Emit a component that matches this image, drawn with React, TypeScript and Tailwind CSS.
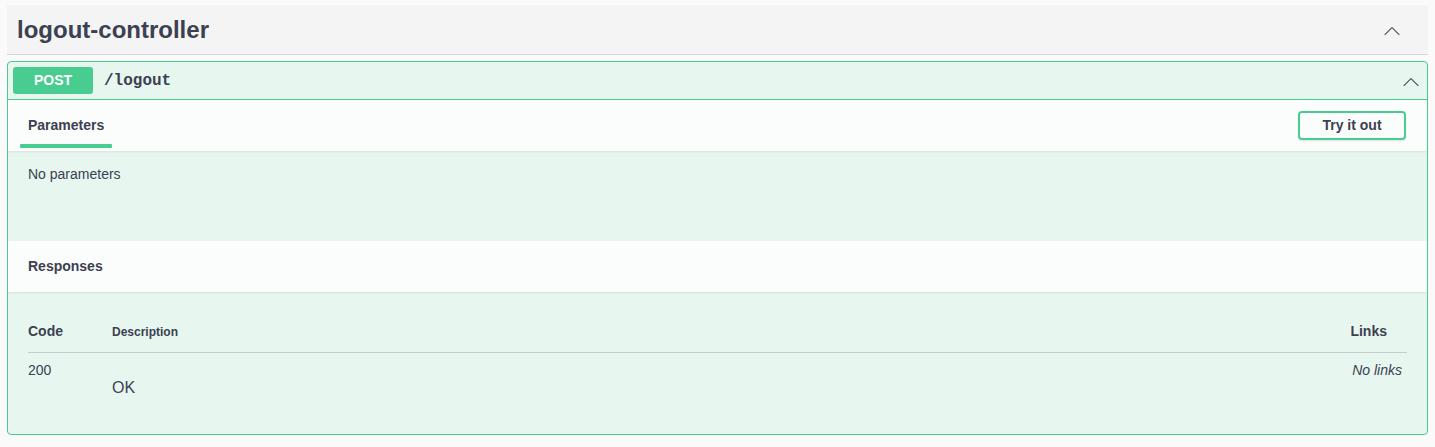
export default function App() {
  return (
    <div className="min-h-[447px] w-full bg-[#fafafa] px-[7px] pt-[5px] font-['Liberation_Sans',Arial,sans-serif] text-[#3b4151]">
      {/* Tag header */}
      <div className="flex h-[50px] items-center justify-between border-b border-[#d4d8dc] bg-[#f4f4f4] pl-[10px] pr-[26px]">
        <h3 className="text-[24px] font-bold leading-none">logout-controller</h3>
        <Chevron className="h-[20px] w-[20px] text-[#3b4151]" />
      </div>

      {/* Operation block */}
      <div className="mt-[6px] overflow-hidden rounded-[4px] border border-[#49cc90] bg-[#e8f6f0]">
        <div className="flex h-[38px] items-center border-b border-[#49cc90] pl-[5px] pr-[6px]">
          <span className="flex h-[27px] w-[80px] items-center justify-center rounded-[3px] bg-[#49cc90] text-[14px] font-bold text-white">
            POST
          </span>
          <span className="ml-[11px] mt-[1px] font-['Liberation_Mono','Courier_New',monospace] text-[16px] font-bold">
            /logout
          </span>
          <Chevron className="ml-auto h-[20px] w-[20px] text-[#3b4151]" />
        </div>

        {/* Parameters header */}
        <div className="flex h-[51px] items-center justify-between bg-[#fbfdfc] pl-[12px] pr-[21px] shadow-[0_1px_2px_rgba(0,0,0,0.08)]">
          <div className="relative flex h-full items-center px-[8px]">
            <span className="text-[14px] font-bold">Parameters</span>
            <span className="absolute bottom-[3px] left-0 h-[4px] w-[92px] rounded-[1px] bg-[#49cc90]" />
          </div>
          <button className="h-[29px] w-[108px] rounded-[4px] border-2 border-[#49cc90] bg-transparent text-[14px] font-bold text-[#3b4151] shadow-[0_1px_2px_rgba(0,0,0,0.1)]">
            Try it out
          </button>
        </div>

        <div className="h-[90px] px-[20px] pt-[13px] text-[14px]">No parameters</div>

        {/* Responses header */}
        <div className="flex h-[51px] items-center bg-[#fbfdfc] px-[20px] shadow-[0_1px_2px_rgba(0,0,0,0.08)]">
          <span className="text-[14px] font-bold">Responses</span>
        </div>

        <div className="px-[20px] pb-[34px] pt-[29px]">
          <table className="w-full border-collapse">
            <thead>
              <tr className="border-b border-[#c6cbce] text-left">
                <th className="w-[84px] pb-[10px] text-[14px] font-bold">Code</th>
                <th className="pb-[10px] text-[12px] font-bold">Description</th>
                <th className="pb-[10px] pr-[20px] text-right text-[14px] font-bold">Links</th>
              </tr>
            </thead>
            <tbody>
              <tr className="align-top">
                <td className="pt-[7px] text-[14px]">200</td>
                <td className="pt-[23px] text-[16px]">OK</td>
                <td className="pt-[7px] pr-[5px] text-right text-[14px] italic">No links</td>
              </tr>
            </tbody>
          </table>
        </div>
      </div>
    </div>
  );
}

function Chevron({ className }: { className?: string }) {
  return (
    <svg viewBox="0 0 20 20" className={className} fill="currentColor" aria-hidden="true">
      <path d="M17.418 14.908c-.189.189-.496.189-.686 0L10 8.175l-6.732 6.733c-.19.189-.496.189-.686 0s-.19-.497 0-.686l7.074-7.074c.19-.189.496-.189.686 0l7.074 7.074c.192.19.192.497.002.686z" />
    </svg>
  );
}
